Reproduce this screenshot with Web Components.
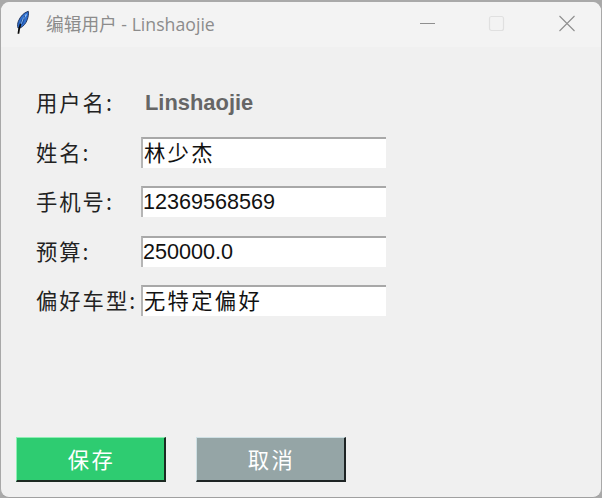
<!DOCTYPE html>
<html lang="zh"><head><meta charset="utf-8"><title>编辑用户</title>
<style>
html,body{margin:0;padding:0;width:602px;height:498px;overflow:hidden;background:#a9a9a9}
body{font-family:"Liberation Sans","Noto Sans CJK SC",sans-serif}
</style></head><body>
<app-window>
  <title-bar slot="title">编辑用户 - Linshaojie</title-bar>
  <form-row label="用户名:"><strong-value>Linshaojie</strong-value></form-row>
  <form-row label="姓名:"><text-field cjk>林少杰</text-field></form-row>
  <form-row label="手机号:"><text-field>12369568569</text-field></form-row>
  <form-row label="预算:"><text-field>250000.0</text-field></form-row>
  <form-row label="偏好车型:"><text-field cjk>无特定偏好</text-field></form-row>
  <tk-button slot="actions" color="#2ecc71" light="#8df0b4" dark="#1c2a22">保存</tk-button>
  <tk-button slot="actions" color="#95a5a6" light="#cfe0e4" dark="#1e2424">取消</tk-button>
</app-window>
<script>
function def(name,css,html,init){
  customElements.define(name,class extends HTMLElement{
    connectedCallback(){
      if(this.shadowRoot)return;
      const r=this.attachShadow({mode:"open"});
      r.innerHTML="<style>"+css+"</style>"+html;
      if(init)init(this,r);
    }
  });
}
def("app-window",`
:host{display:flex;flex-direction:column;box-sizing:border-box;width:602px;height:496px;margin-top:2px;background:#f0f0f0;
  border-left:1px solid #a8a8a8;border-right:1px solid #a8a8a8;border-bottom:1px solid #a0a0a0;border-radius:9px;overflow:hidden}
.body{flex:1;display:flex;flex-direction:column;justify-content:space-between;padding:0 0 15px 15px}
.form{display:grid;grid-auto-rows:31px;row-gap:18.5px;padding:40px 0 0 20px}
.actions{display:flex;gap:30px}
`,`<slot name="title"></slot><div class="body"><div class="form"><slot></slot></div><div class="actions"><slot name="actions"></slot></div></div>`);
def("title-bar",`
:host{display:flex;align-items:center;box-sizing:border-box;height:45px;flex:none;background:#f3f3f3;color:#8c8c8c;font:17.700px "Open Sans","Noto Sans CJK SC",sans-serif;padding-bottom:4px}
.ico{width:18px;height:25px;margin:0 15px 0 12px;flex:none}
.t{flex:1;white-space:nowrap}
.b{width:24px;height:24px;flex:none;display:block}
.ctl{display:flex;margin-right:22px}
.b.min{margin-right:44px}
.b.max{margin-right:47px}
`,`<svg class="ico" viewBox="0 0 20 27">
<path d="M17 1C12 2.500 8 7 6 12c-1.100 2.800-1.100 5.200-.5 7.500l2.200.2c4-1.800 6.800-5.200 8.300-9.700.9-2.900 1.600-6.300 1-9z" fill="#2f6fd0" stroke="#1a2c55" stroke-width="1"/>
<path d="M15 4.500C12 8.500 10 12 8.500 15" fill="none" stroke="#9cc8f5" stroke-width="1.300"/>
<path d="M13 6l-2.500 9.500M10 10l-2.200 6.500" fill="none" stroke="#123a80" stroke-width=".8"/>
<path d="M8.500 15C7.200 18.500 6.200 21.500 6 26" fill="none" stroke="#0a0a0a" stroke-width="1.900"/>
</svg><span class="t"><slot></slot></span><div class="ctl">
<svg class="b min" viewBox="0 0 24 24"><path d="M4 12.500H19" stroke="#8f8f8f" stroke-width="1" fill="none"/></svg>
<svg class="b max" viewBox="0 0 24 24"><rect x="5.500" y="5.500" width="14" height="14" rx="2" fill="none" stroke="#e0e0e0" stroke-width="1.200"/></svg>
<svg class="b" viewBox="0 0 24 24"><path d="M4.500 5L19.500 20M19.500 5L4.500 20" stroke="#8f8f8f" stroke-width="1.100" fill="none"/></svg>
</div>`);
def("form-row",`
:host{display:grid;grid-template-columns:105px 245px;align-items:center;height:31px}
.l{font:21.300px "Noto Sans CJK SC",sans-serif;letter-spacing:2px;color:#222;white-space:nowrap;line-height:29px;align-self:start}
`,`<span class="l"></span><slot></slot>`,(h,r)=>{r.querySelector(".l").textContent=h.getAttribute("label")});
def("strong-value",`
:host{display:block;font:bold 21.900px "Liberation Sans",sans-serif;color:#666;padding-left:4px;line-height:31px}
`,`<slot></slot>`);
def("text-field",`
:host{display:block;box-sizing:border-box;width:245px;height:31px;background:#fff;border-top:2px solid #a8a8a8;border-left:2px solid #b5b5b5;
  font:21.600px/28px "Liberation Sans","Noto Sans CJK SC",sans-serif;color:#111;white-space:nowrap;overflow:hidden}
:host([cjk]){font-family:"Noto Sans CJK SC",sans-serif;font-size:21.300px;letter-spacing:2.300px;padding-left:1px;line-height:26px}
`,`<slot></slot>`);
def("tk-button",`
:host{display:flex;align-items:center;justify-content:center;box-sizing:border-box;width:150px;height:45px;color:#fff;
  font:21.300px "Noto Sans CJK SC",sans-serif;letter-spacing:2.500px;border-style:solid;border-width:1px 2px 2px 1px;padding:0 0 2px 2px}
`,`<slot></slot>`,(h)=>{const c=h.getAttribute("color"),l=h.getAttribute("light"),d=h.getAttribute("dark");
h.style.background=c;h.style.borderColor=l+" "+d+" "+d+" "+l;});
</script>
</body></html>
